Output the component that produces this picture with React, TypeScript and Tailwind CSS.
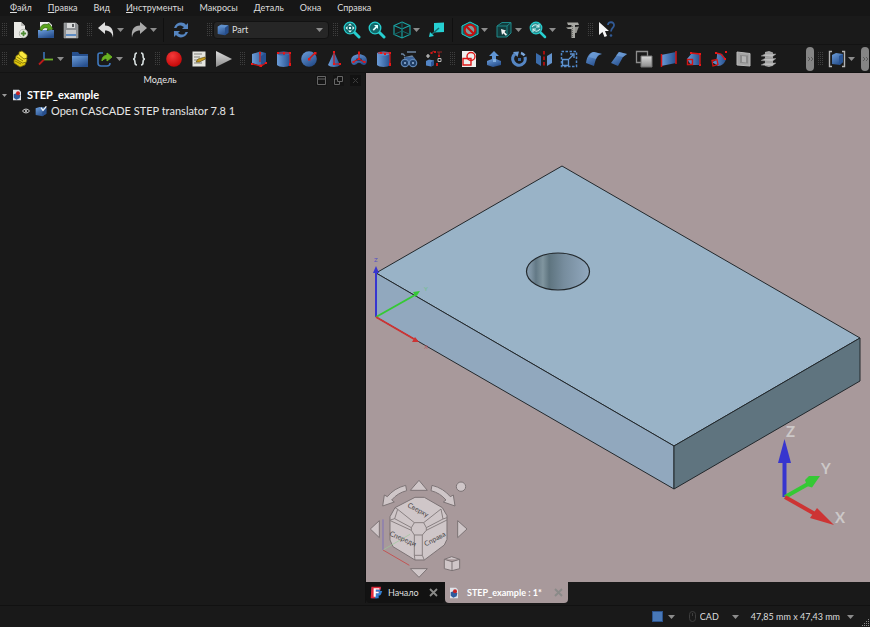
import type { ReactNode } from "react";

interface IconProps {
  children: ReactNode
  size?: number
}

interface ToolProps {
  label: string
  menu?: boolean
  narrow?: boolean
  children: ReactNode
}

const Icon = ({ children, size = 18 }: IconProps) => (
  <svg width={size} height={size} viewBox="0 0 18 18" fill="none" className="shrink-0">{children}</svg>
)

const Caret = () => (
  <svg width="7" height="4" viewBox="0 0 7 4" className="shrink-0"><path d="M0 0h7L3.5 4z" fill="#8c8c8c" /></svg>
)

const Tool = ({ label, menu, narrow, children }: ToolProps) => (
  <button
    type="button"
    aria-label={label}
    className={`flex h-6 shrink-0 items-center gap-[2px] pl-1 hover:bg-[#2b2b2b] ${menu ? (narrow ? "w-[33px]" : "w-[34px]") : "w-[25px]"}`}
  >
    <Icon>{children}</Icon>
    {menu && <Caret />}
  </button>
)

const dots = [0, 2, 4, 6, 8, 10, 12]

const Handle = () => (
  <span className="flex w-[10px] shrink-0 justify-end pr-px">
    <svg width="5" height="14" viewBox="0 0 5 14">
      {dots.map((y) => (
        <path key={y} d={`M0 ${y}h1v1H0zM2 ${y}h1v1H2zM4 ${y}h1v1H4z`} fill="#3f3f3f" />
      ))}
    </svg>
  </span>
)

const Separator = () => <span className="mx-1 h-6 w-px shrink-0 bg-[#101010]" />

const More = () => (
  <button type="button" aria-label="Ещё" className="flex h-6 w-2 shrink-0 items-center justify-center rounded-sm bg-[#858585]">
    <svg width="5" height="4" viewBox="0 0 5 4"><path d="M0 0l2 2-2 2M3 0l2 2-2 2" stroke="#5a5a5a" fill="none" /></svg>
  </button>
)

const Gradients = () => (
  <svg width="0" height="0" className="absolute" aria-hidden="true">
    <defs>
      <linearGradient id="blue" x1="0" y1="0" x2="0.6" y2="1">
        <stop offset="0" stopColor="#6d9fdc" />
        <stop offset="1" stopColor="#274f8d" />
      </linearGradient>
      <linearGradient id="blueH" x1="0" y1="0" x2="1" y2="0">
        <stop offset="0" stopColor="#6b9cd8" />
        <stop offset="1" stopColor="#26508f" />
      </linearGradient>
      <linearGradient id="grey" x1="0" y1="0" x2="0" y2="1">
        <stop offset="0" stopColor="#dcdcdc" />
        <stop offset="1" stopColor="#8b8b8b" />
      </linearGradient>
      <radialGradient id="red" cx="0.4" cy="0.3" r="0.7">
        <stop offset="0" stopColor="#f43a3a" />
        <stop offset="1" stopColor="#c40808" />
      </radialGradient>
    </defs>
  </svg>
)

const menus = [
  { key: "Ф", text: "айл" },
  { key: "П", text: "равка" },
  { key: "", text: "Вид" },
  { key: "И", text: "нструменты" },
  { key: "", text: "Макросы" },
  { key: "Д", text: "еталь" },
  { key: "", text: "Окна" },
  { key: "", text: "Справка" },
]

const MenuBar = () => (
  <nav className="flex h-4 items-center gap-4 bg-[#161616] px-[10px]">
    {menus.map((item) => (
      <button type="button" key={item.text} className="text-[9px] leading-4 text-[#dedede]">
        {item.key && <span className="underline underline-offset-1">{item.key}</span>}{item.text}
      </button>
    ))}
  </nav>
)

const FileToolbar = () => (
  <div className="flex h-[29px] items-center border-b border-[#131313] bg-[#1a1a1a]">
    <span className="-ml-[2px] flex"><Handle /></span>
    <Tool label="Создать">
      <path d="M2 1h7l4 4v12H2z" fill="#e9e9e5" />
      <path d="M9 1v4h4z" fill="#b9b9b5" />
      <circle cx="11.5" cy="12.5" r="4.2" fill="#f0f0ee" stroke="#a4aaa0" strokeWidth="0.8" />
      <path d="M11.5 9.8v5.4M8.8 12.5h5.4" stroke="#4c8a32" strokeWidth="1.8" />
    </Tool>
    <Tool label="Открыть">
      <path d="M3 1h9l3 3v8H3z" fill="#ececec" />
      <path d="M1 9h16v8H1z" fill="url(#blue)" />
      <path d="M3 9C3 5 6 2.500 10 3.500l2-1 4 5.500-6 1.500 1-2C9 6 6 6.500 5 9.500z" fill="#5aa51c" stroke="#2e5d0c" strokeWidth="0.7" />
    </Tool>
    <Tool label="Сохранить">
      <path d="M2 2h12l2 2v13H2z" fill="#8d9093" stroke="#a8abad" strokeWidth="0.6" />
      <path d="M5 2h8v5H5z" fill="#d9dadb" />
      <path d="M10 3h2v3h-2z" fill="#55585b" />
      <path d="M4 9h10v8H4z" fill="#c6c8ca" />
      <path d="M4 13h10v2H4z" fill="#5d8cc4" />
    </Tool>
    <Handle />
    <Tool label="Отменить" menu narrow>
      <path d="M1 7l7-6v3.500c6 0 9 4 8 12-1-5-3.500-7-8-7V13z" fill="#dedede" />
    </Tool>
    <Tool label="Повторить" menu narrow>
      <path d="M17 7l-7-6v3.500c-6 0-9 4-8 12 1-5 3.500-7 8-7V13z" fill="#a9a9a9" />
    </Tool>
    <Separator />
    <Tool label="Обновить">
      <path d="M2 7C4 1 11 0 14 4l2-2v6h-6l2-2C9 3.500 5 4 4.500 7z" fill="#5585c0" />
      <path d="M16 11c-2 6-9 7-12 3l-2 2v-6h6l-2 2c3 2.500 7 2 7.500-1z" fill="#5585c0" />
    </Tool>
    <span className="ml-[10px] flex"><Handle /></span>
    <label className="relative flex h-[18px] w-[116px] shrink-0 items-center rounded-sm border border-[#121212] bg-[#262626]">
      <span className="pointer-events-none absolute left-[3px]">
        <Icon size={12}>
          <path d="M1 4l5-3 11 1v11l-5 4-11-2z" fill="url(#blue)" />
          <path d="M1 4l11 1.500L17 2 6 1z" fill="#5f90cc" />
          <path d="M12 5.500V17l5-4V2z" fill="#274f8d" />
        </Icon>
      </span>
      <select aria-label="Верстак" className="w-full appearance-none bg-transparent pl-[18px] text-[9px] leading-4 text-[#dedede] outline-none">
        <option>Part</option>
      </select>
      <span className="pointer-events-none absolute right-[5px]"><Caret /></span>
    </label>
    <Handle />
    <Tool label="Вписать всё">
      <path d="M11 11l5 5" stroke="#27cfd0" strokeWidth="3" strokeLinecap="round" />
      <circle cx="7" cy="7" r="5.800" fill="#12686a" stroke="#27cfd0" strokeWidth="1.300" />
      <path d="M7 2.500l2 2H5zM7 11.500l2-2H5zM2.500 7l2-2v4zM11.500 7l-2-2v4zM6 6h2v2H6z" fill="#e3ffff" />
    </Tool>
    <Tool label="Вписать выделенное">
      <path d="M11 11l5 5" stroke="#27cfd0" strokeWidth="3" strokeLinecap="round" />
      <circle cx="7" cy="7" r="5.800" fill="#12686a" stroke="#27cfd0" strokeWidth="1.300" />
      <path d="M10 4v4L8.800 6.800l-3 3-1.200-1.200 3-3L6 4z" fill="#e3ffff" />
    </Tool>
    <Tool label="Изометрия" menu>
      <path d="M9 1l8 3.500v9L9 17l-8-3.500v-9z" stroke="#1aa6a6" strokeWidth="1.100" />
      <path d="M1 4.500L9 8l8-3.500M9 8v9" stroke="#1aa6a6" strokeWidth="1.100" />
      <path d="M1 13.500L9 10l8 3.500M9 1v9" stroke="#12686a" />
    </Tool>
    <Tool label="Выровнять по выделенному">
      <path d="M7 2l10-.5V11l-10 .5z" fill="#26d0d2" />
      <path d="M12 7l-8 7" stroke="#146e70" strokeWidth="1.500" />
      <path d="M2 16l1-5 4 4z" fill="#26d0d2" />
    </Tool>
    <Separator />
    <Tool label="Стиль отображения" menu>
      <path d="M9 1l8 4v8l-8 4-8-4V5z" fill="#166365" stroke="#27cfd0" />
      <circle cx="9" cy="9" r="5.300" fill="#7f9c9c" stroke="#c40f0f" strokeWidth="2" />
      <path d="M5.500 5.500l7 7" stroke="#c40f0f" strokeWidth="2.200" />
    </Tool>
    <Tool label="Выбор" menu>
      <path d="M2 5l5-3.500h9V12l-4 4H2z" fill="#123c3d" stroke="#1e8889" />
      <path d="M2 5h10v11M12 5l4-3.500" stroke="#1e8889" />
      <path d="M6 8l5 1.500-1.500 1.500 2.500 2.500-1.200 1.200L8.300 12.200 7 14z" fill="#f2f2f2" />
    </Tool>
    <Tool label="Масштаб" menu>
      <path d="M11 11l5 5" stroke="#27cfd0" strokeWidth="2.500" strokeLinecap="round" />
      <circle cx="7" cy="7" r="5.800" fill="#2b8e91" stroke="#27cfd0" strokeWidth="1.200" />
      <path d="M3 6c2-3 5-3 7 0M11 8c-2 3-5 3-7 0M10 3v3H7M4 11V8h3" stroke="#cfeeee" strokeWidth="1.100" />
    </Tool>
    <Tool label="Измерить">
      <path d="M4 1.500h11l1 2.500h-4v13H8.500V8H5L3 6.500 8.500 6V4H5z" fill="#a7a7a2" />
      <path d="M12 6l4-.5-1.500 3.500-1 3H12z" fill="#93938e" />
      <path d="M9.500 5v11" stroke="#6e6e6a" strokeDasharray="1 1" />
    </Tool>
    <Handle />
    <Tool label="Что это?">
      <path d="M1 1l10 9H7l2 5-2.500 1-2-5L1 14z" fill="#f4f4f4" />
      <path d="M10 4c0-4 6.500-3.500 6 .5-.3 2.500-3 2.500-3 6" stroke="#315a96" strokeWidth="1.800" />
      <circle cx="13" cy="14.500" r="1.300" fill="#315a96" />
    </Tool>
  </div>
)

const PartToolbar = () => (
  <div className="flex h-[28px] items-center border-b border-[#131313] bg-[#1a1a1a]">
    <span className="-ml-[2px] flex"><Handle /></span>
    <Tool label="Деталь">
      <path d="M2 10l3-2 9 4-1 3-5 2-6-4z" fill="#e0c70c" stroke="#76680a" strokeWidth="0.8" />
      <path d="M4 6l3-2 8 5-.5 3-4 1L3.500 9z" fill="#f1dd26" stroke="#76680a" strokeWidth="0.8" />
      <path d="M7 2l3-1 5 4v3l-3 1-5-4z" fill="#fbe93d" stroke="#76680a" strokeWidth="0.8" />
      <path d="M3 11l6 3M5 7l6 4" stroke="#8f7e08" />
    </Tool>
    <Tool label="Система координат" menu>
      <path d="M7 9V2" stroke="#3b74b8" strokeWidth="1.600" />
      <path d="M7 9.500h9" stroke="#6fae2c" strokeWidth="1.800" />
      <path d="M7 9.500l-5 5" stroke="#bb1a1a" strokeWidth="1.800" />
    </Tool>
    <Tool label="Группа">
      <path d="M1 2h6l1.500 2H17v13H1z" fill="#27508e" />
      <path d="M1 6h16v11H1z" fill="url(#blue)" />
    </Tool>
    <Tool label="Ссылка" menu>
      <path d="M7 3H4C2.500 3 2 4 2 5v8c0 2 1 3 3 3h6c2 0 3-1 3-3" stroke="#3f78bd" strokeWidth="1.600" />
      <path d="M6 11c0-4 2-5.500 5-5.500V3l5 4-5 4V8.500c-2 0-4 .5-5 2.500z" fill="#68b021" stroke="#68b021" />
    </Tool>
    <Tool label="Переменные">
      <path d="M7 3C5 3 5 4 5 5.500S5 9 3 9c2 0 2 2 2 3.500S5 15 7 15M11 3c2 0 2 1 2 2.500S13 9 15 9c-2 0-2 2-2 3.500s0 2.500-2 2.500" stroke="#d4dcdc" strokeWidth="1.600" />
    </Tool>
    <Handle />
    <Tool label="Записать макрос"><circle cx="9" cy="9" r="7.800" fill="url(#red)" /></Tool>
    <Tool label="Макросы">
      <path d="M2.500 1.500h13v15h-13z" fill="#e4e4de" />
      <path d="M4 4h8M4 7h6M4 10h4M4 13h8" stroke="#81817c" />
      <path d="M6 12l2-3 7-2 .5 2-6 3z" fill="#c69a1b" stroke="#53450f" strokeWidth="0.6" />
    </Tool>
    <Tool label="Выполнить макрос"><path d="M1 1l16 8-16 8z" fill="url(#grey)" /></Tool>
    <Handle />
    <Tool label="Куб">
      <path d="M2 4l8-2.500 6 1.500v10l-5 3-9-3z" fill="url(#blueH)" />
      <path d="M11 6V16l5-3V3z" fill="#26508f" />
      <path d="M10 3v9M2 14l9 2 5-3" stroke="#c91414" strokeWidth="1.200" />
      <path d="M9 2h2v2H9zM1 13h2v2H1zM9.500 14.500h2.500V17H9.500zM15 12h2v2h-2z" fill="#ea1616" />
    </Tool>
    <Tool label="Цилиндр">
      <path d="M2 3h13v12c-2 2.500-11 2.500-13 0z" fill="url(#blueH)" />
      <ellipse cx="8.500" cy="3.500" rx="6.500" ry="2" fill="#3969a9" />
      <path d="M3 3h12v12M9 2v3" stroke="#cc1313" strokeWidth="1.200" />
      <path d="M2 2h2v2H2zM8 2h2v2H8zM14 2h2v2h-2zM14 13h2v3h-2z" fill="#ea1616" />
    </Tool>
    <Tool label="Сфера">
      <circle cx="9" cy="9" r="7.800" fill="url(#blue)" />
      <path d="M9 9l6-6" stroke="#cc1313" strokeWidth="1.400" />
      <path d="M8 8h2.500v2.500H8zM14 2h2.500v2.500H14z" fill="#ea1616" />
    </Tool>
    <Tool label="Конус">
      <path d="M9 2l6 13c-2 2.500-10 2.500-12 0z" fill="url(#blueH)" />
      <path d="M9 2v12h6" stroke="#cc1313" strokeWidth="1.200" />
      <path d="M8 1h2v2H8zM8 13h2v2H8zM14 13h2v2h-2z" fill="#ea1616" />
    </Tool>
    <Tool label="Тор">
      <path d="M1 10.500C1 2 17 2 17 10.500c0 5-4 5.500-6 3-1-1-3-1-4 0-2 2.500-6 2-6-3z" fill="url(#blue)" />
      <ellipse cx="9" cy="9.500" rx="3" ry="1.500" fill="#1f3d6b" />
      <path d="M9 3v6l-6 3M9 9l5 3" stroke="#cc1313" strokeWidth="1.100" />
      <path d="M8 1.500h2v3H8zM8 8h2v2H8zM2.500 11h2v2h-2zM13.500 11h2v2h-2z" fill="#ea1616" />
    </Tool>
    <Tool label="Труба">
      <path d="M2 3h13v12c-2 2.500-11 2.500-13 0z" fill="url(#blueH)" />
      <ellipse cx="8.500" cy="3.500" rx="6.500" ry="2" fill="#5f8fca" />
      <path d="M3 3h12v12" stroke="#cc1313" strokeWidth="1.200" />
      <path d="M5 2h2v2H5zM9 3h2v2H9zM14 2h2v2h-2zM14 13h2v3h-2z" fill="#ea1616" />
    </Tool>
    <Tool label="Примитивы">
      <path d="M7 2h9M5 6l-2-2H1M4 8l8-2 3 4" stroke="#6d87a3" strokeWidth="1.300" />
      <path d="M5 7h9l1 5H6z" fill="#3d659b" />
      <circle cx="5" cy="13" r="3.700" fill="#203e66" stroke="#5f86b6" strokeWidth="1.200" />
      <circle cx="13" cy="13" r="3.700" fill="#203e66" stroke="#5f86b6" strokeWidth="1.200" />
      <path d="M4 12h2v2H4zM12 12h2v2h-2z" fill="#7c9abf" />
    </Tool>
    <Tool label="Построитель фигур">
      <path d="M1 11l3-1.500 5 1V15l-3 1.500-5-1z" fill="#5285c6" />
      <path d="M6 12v4.500l3-1.500v-4.500z" fill="#2c5697" />
      <path d="M1 6h4M3 4v4" stroke="#cfcfcf" strokeWidth="1.200" />
      <path d="M6 3l3-2M12 2h5M14 2v4" stroke="#8e2222" strokeWidth="1.200" />
      <path d="M5.500 2h2v2h-2zM9 1h2v2H9zM13 5h2v2h-2zM11 13h2v3h-2z" fill="#c91616" />
      <path d="M13 8.500h3v3h-3z" stroke="#b9b9b9" />
    </Tool>
    <Handle />
    <Tool label="Эскиз">
      <path d="M2 1h11l3 3v13H2z" fill="#efefee" />
      <path d="M3 8.500h8V15H3z" stroke="#dc1717" strokeWidth="1.400" />
      <circle cx="11" cy="6.500" r="4" stroke="#dc1717" strokeWidth="1.400" />
    </Tool>
    <Tool label="Выдавить">
      <path d="M9 1l5 5h-3v5H7V6H4z" fill="#5f95d5" />
      <path d="M2 11l5-2h4l5 2v4l-8 2-6-2z" fill="url(#blue)" />
      <path d="M8 9h3v3H8z" fill="#83afe1" />
    </Tool>
    <Tool label="Вращать">
      <path d="M5 4a6.300 6.300 0 1 0 10 3" stroke="#5586c4" strokeWidth="3.200" />
      <path d="M11 3a7 7 0 0 1 3.500 2.500" stroke="#7aa7dc" strokeWidth="2.500" />
      <path d="M3 2l6-.5-1.500 5.500z" fill="#6a9bd6" />
      <path d="M8 8h3v3H8z" fill="#35639f" />
    </Tool>
    <Tool label="Отразить">
      <path d="M1 3l5 3v10l-5-3z" fill="#3b6cab" />
      <path d="M17 3l-5 3v10l5-3z" fill="#6494ce" />
      <path d="M9 1v16" stroke="#b30f0f" strokeWidth="1.800" strokeDasharray="3.500 2" />
    </Tool>
    <Tool label="Масштабировать">
      <path d="M1.500 1.500h15v15h-15z" stroke="#4f86c7" strokeWidth="1.500" strokeDasharray="2.500 1.500" />
      <path d="M2.500 9.500h6v6h-6z" fill="#182636" stroke="#5f93d0" strokeWidth="1.300" />
      <path d="M9 9l4-4M10 4h4v4" stroke="#5f93d0" strokeWidth="1.300" />
    </Tool>
    <Tool label="Скругление">
      <path d="M1 13C2 6 5 2 9 2l8 2c-5 1-6 4-8 12z" fill="url(#blue)" />
      <path d="M9 2l8 2c-4 0-5 3-6 5L4 7c1-3 3-5 5-5z" fill="#77a6df" opacity="0.6" />
    </Tool>
    <Tool label="Фаска">
      <path d="M1 13L9 2l8 2-4 3-5 9z" fill="url(#blue)" />
      <path d="M9 2l8 2-4 3-7-1.500z" fill="#79a8e0" opacity="0.6" />
    </Tool>
    <Tool label="Грань из контуров">
      <path d="M1.500 1.500h11v11h-11z" fill="#1c1c1c" stroke="#8d8d8d" strokeWidth="1.300" />
      <path d="M6 6h11v11H6z" fill="url(#grey)" stroke="#727272" />
    </Tool>
    <Tool label="Линейчатая поверхность">
      <path d="M1 5l15-3v11L1 16z" fill="url(#blueH)" />
      <path d="M1.500 4v13M16 1v13" stroke="#d31414" strokeWidth="1.500" />
    </Tool>
    <Tool label="Профиль">
      <path d="M2 9l5-6 8 1v11l-9 0z" fill="url(#blueH)" />
      <path d="M2.500 9.500h5v5h-5zM6 3l9 1v11" stroke="#d31414" strokeWidth="1.400" />
      <path d="M5 2h2v2H5zM14 3h2v2h-2zM14 14h2v2h-2z" fill="#ea1616" />
    </Tool>
    <Tool label="Сдвиг по траектории">
      <path d="M2 12c5-1 5-4 5-8l5 0 4 5c-1 4-4 7-8 7z" fill="url(#blueH)" />
      <path d="M2 10.500l5-1 1 5-5 1.500zM6 3l5 1 4 5" stroke="#d31414" strokeWidth="1.300" />
      <path d="M5 2h2v2H5zM14 8h2v2h-2zM15 1h2v2h-2z" fill="#ea1616" />
    </Tool>
    <Tool label="Сечение">
      <path d="M2 2l13 1.500V16L2 15z" fill="#a4a4a4" stroke="#b9b9b9" />
      <path d="M5 5l8 .500v8L5 13z" fill="#8a8a8a" />
      <path d="M7 6l4 .500v6L7 12z" fill="#b4b4b4" />
    </Tool>
    <Tool label="Поперечные сечения">
      <path d="M5 2l4-1 4 1.500v13L9 17l-4-1z" fill="#a6a6a6" />
      <path d="M1 6l4-2h11l-4 3zM1 10.500l4-2h11l-4 3zM1 15l4-2h11l-4 3z" fill="#bebebe" stroke="#8d8d8d" strokeWidth="0.500" />
    </Tool>
    <span className="ml-auto flex items-center">
      <More />
      <Handle />
      <Tool label="Соединение" menu>
        <path d="M4 5l4-2 7 1v8l-3 3-8-1z" fill="url(#blue)" />
        <path d="M11 6v9l4-3V4z" fill="#285393" />
        <path d="M4 1.500H1.500v15H4M14 1.500h2.500v15H14" stroke="#b4b4b4" strokeWidth="1.400" />
      </Tool>
      <span className="mr-px ml-[3px] flex"><More /></span>
    </span>
  </div>
)

const DocIcon = () => (
  <Icon size={12}>
    <path d="M3 1h9l3 3v13H3z" fill="#dfe4ea" />
    <path d="M4 8l5-2 5 3-1 5-5 2-4-3z" fill="#2f5b9c" />
    <circle cx="10.500" cy="6.500" r="3" fill="#c92222" />
  </Icon>
)

const ModelPanel = () => (
  <aside className="flex min-w-0 flex-col border-r border-[#111] bg-[#191919] text-[#e6e6e6]">
    <header className="flex h-[14px] items-center pr-1">
      <h2 className="flex-1 pl-1 text-center text-[9px] leading-[14px]">Модель</h2>
      <div className="flex gap-[6px]">
        <button type="button" aria-label="Свернуть" className="flex size-[11px] items-center justify-center bg-[#141414]">
          <svg width="9" height="9" viewBox="0 0 9 9"><path d="M.5.5h8v8h-8zM.5 3h8" stroke="#666" fill="none" /></svg>
        </button>
        <button type="button" aria-label="Открепить" className="flex size-[11px] items-center justify-center bg-[#141414]">
          <svg width="9" height="9" viewBox="0 0 9 9"><path d="M3.500.5h5v5h-5zM3.500 3h-3v5.500h5v-3" stroke="#666" fill="none" /></svg>
        </button>
        <button type="button" aria-label="Закрыть" className="flex size-[11px] items-center justify-center bg-[#121212]">
          <svg width="7" height="7" viewBox="0 0 7 7"><path d="M1 1l5 5M6 1L1 6" stroke="#3c3c3c" /></svg>
        </button>
      </div>
    </header>
    <ul>
      <li>
        <div className="flex h-4 items-center pl-[2px]">
          <svg width="5" height="3" viewBox="0 0 5 3"><path d="M0 0h5L2.500 3z" fill="#9a9a9a" /></svg>
          <span className="ml-1"><DocIcon /></span>
          <span className="ml-1 text-[11px] leading-4 font-bold text-white">STEP_example</span>
        </div>
        <ul>
          <li className="flex h-4 items-center pl-[22px]">
            <svg width="8" height="6" viewBox="0 0 8 6">
              <path d="M.5 3C2 .5 6 .5 7.500 3 6 5.500 2 5.500.5 3z" stroke="#cfcfcf" fill="none" />
              <circle cx="4" cy="3" r="1" fill="#ddd" />
            </svg>
            <span className="ml-[5px]">
              <Icon size={12}>
                <path d="M1 5l6-2 10 1v9l-6 4-10-2z" fill="url(#blue)" />
                <path d="M11 7v10l6-4V4z" fill="#274f8d" />
                <path d="M9 4l3 4 5-6" stroke="#f2f6fb" strokeWidth="2" />
              </Icon>
            </span>
            <span className="ml-1 text-[11px] leading-4">Open CASCADE STEP translator 7.8 1</span>
          </li>
        </ul>
      </li>
    </ul>
  </aside>
)

// Rotation cube, drawn on a 3x grid
const NavigationCube = () => (
  <g>
    <g transform="translate(365 470) scale(.3333)" fill="#cfc6c8" stroke="#7b7274" strokeWidth="3" strokeLinejoin="round">
      <path d="M136 61l26-30 25 30zM136 296h51l-25 26zM16 177l27-25v51zM306 177l-28-25v51z" />
      <path d="M122 46C98 52 80 64 67 80L58 75 53 108 88 96 80 90C92 76 106 67 125 62z" />
      <path d="M201 46C225 52 243 64 256 80L265 75 270 108 235 96 243 90C231 76 217 67 198 62z" />
      <circle cx="288" cy="50" r="14" />
      <path d="M238 268l22-8 24 8v28l-23 6-23-6zM238 268l23 7 23-7M261 275v27" />
      <path d="M150 82h28l54 31 14 24v71l-8 17-60 45h-28l-66-40-9-20v-70l15-27z" />
      <path
        fill="none"
        strokeWidth="2.500"
        d="M98 118l50 40h28l52-41M89 146l50 27M234 147l-50 26M148 158l-9 15v8l9 14h24l12-14v-8l-8-15M148 195v61h24v-61M98 118l-9 28M228 117l6 30M98 118l-8-5M89 146l-13 4M234 147l12-4M76 152l63 29M246 150l-62 31M148 256l2 14M172 256l6 14"
      />
      <path d="M54 148v92" stroke="#7d72bb" fill="none" />
      <path d="M54 240l81-47" stroke="#98c898" fill="none" strokeWidth="2" />
      <path d="M54 240l79 46" stroke="#c25454" fill="none" />
    </g>
    <g fill="#4b4648" fontSize="7" textAnchor="middle">
      <text transform="translate(417 512) rotate(28)">Сверху</text>
      <text transform="translate(402 541) rotate(24)">Спереди</text>
      <text transform="translate(436 541) rotate(-28)">Справа</text>
    </g>
  </g>
)

const Scene = () => (
  <svg viewBox="366 73 504 509" className="min-h-0 w-full flex-1" role="img" aria-label="STEP_example">
    <defs>
      <linearGradient id="bore">
        <stop offset="0" stopColor="#8ba1b4" />
        <stop offset="0.08" stopColor="#7b909f" />
        <stop offset="0.15" stopColor="#637986" />
        <stop offset="0.26" stopColor="#80959f" />
        <stop offset="0.36" stopColor="#5e747f" />
        <stop offset="0.6" stopColor="#778d9e" />
        <stop offset="1" stopColor="#92a9bf" />
      </linearGradient>
    </defs>
    <g stroke="#22282c" strokeLinejoin="round">
      <path d="M562 166L860 338 674 446 376 273z" fill="#99b3c7" />
      <path d="M376 273l298 173v43L376 317z" fill="#91a8be" />
      <path d="M674 446l186-108v43L674 489z" fill="#5f747f" />
      <ellipse cx="558" cy="271.500" rx="31.500" ry="18.500" fill="url(#bore)" strokeWidth="1.200" />
    </g>
    <g strokeWidth="2">
      <path d="M376 317v-46" stroke="#3735cf" />
      <path d="M376 317l39-22" stroke="#35c935" />
      <path d="M376 317l38 22" stroke="#cd3434" />
      <path d="M376 266l-3 7h6z" fill="#3735cf" />
      <path d="M420 291l-7 1 3 5z" fill="#35c935" />
      <path d="M419 342l-4-5-3 5z" fill="#cd3434" />
    </g>
    <g fontSize="6">
      <text x="374" y="262" fill="#5450c4">Z</text>
      <text x="424" y="291" fill="#6ec083">Y</text>
      <text x="424" y="349" fill="#b9606a">X</text>
    </g>
    <g strokeWidth="4">
      <path d="M784.500 497v-36" stroke="#3735cf" />
      <path d="M784.500 439l-6.500 24h13z" fill="#3735cf" />
      <path d="M785 497l23-13" stroke="#35c935" />
      <path d="M820 476l-11 0-4 4 2 6 5 1.500z" fill="#35c935" />
      <path d="M785 497l30 17" stroke="#cd3434" />
      <path d="M834 525l-17-17-7 10z" fill="#cd3434" />
    </g>
    <g fontSize="15" fontWeight="700" fill="#ccc8c8">
      <text x="786" y="437">Z</text>
      <text x="821" y="474">Y</text>
      <text x="835" y="523">X</text>
    </g>
    <NavigationCube />
  </svg>
)

const Cross = () => (
  <svg width="9" height="9" viewBox="0 0 9 9"><path d="M1 1l7 7M8 1L1 8" stroke="#8a8a88" strokeWidth="1.800" /></svg>
)

const DocumentTabs = () => (
  <div className="flex h-[21px] bg-[#191919] text-[9px] leading-4">
    <div className="flex w-[79px] items-center rounded-b-sm bg-[#121212] pl-1 text-[#dedede]">
      <Icon size={13}>
        <path d="M2 2h13l-1 5h3l-2 5h-3v5H2z" fill="#337fd0" />
        <path d="M2 1h13v4H7v3h6v4H7v5H1z" fill="#e02b3b" />
        <path d="M9 9h6l-1 4h-4v4H7z" fill="#337fd0" />
        <path d="M5 3h8v2H8v3h4v2H8v5H5z" fill="#fff" />
      </Icon>
      <button type="button" className="ml-[5px]">Начало</button>
      <button type="button" aria-label="Закрыть Начало" className="mr-[7px] ml-auto"><Cross /></button>
    </div>
    <div className="flex w-[123px] items-center rounded-b-sm bg-[#a8999b] pl-[3px] text-white">
      <DocIcon />
      <button type="button" className="ml-[7px] font-bold">STEP_example : 1*</button>
      <button type="button" aria-label="Закрыть STEP_example" className="mr-[5px] ml-auto"><Cross /></button>
    </div>
  </div>
)

const StatusBar = () => (
  <footer className="flex h-[21px] shrink-0 items-center justify-end bg-[#191919] text-[9px] leading-4 text-[#dedede]">
    <button type="button" aria-label="Уведомления" className="flex items-center gap-[5px]">
      <span className="size-[11px] border border-[#2b528b] bg-[#4878b8]" />
      <Caret />
    </button>
    <label className="relative ml-[14px] flex w-[50px] items-center">
      <svg width="7" height="11" viewBox="0 0 7 11" className="absolute left-0">
        <rect x=".5" y=".5" width="6" height="10" rx="3" stroke="#3d3d3d" fill="none" />
        <path d="M3.500 2v3" stroke="#3d3d3d" />
      </svg>
      <select aria-label="Стиль навигации" className="w-full appearance-none bg-transparent pl-[11px] outline-none">
        <option>CAD</option>
      </select>
      <span className="pointer-events-none absolute right-0"><Caret /></span>
    </label>
    <button type="button" className="ml-3 flex items-center gap-[7px]">
      47,85 mm x 47,43 mm
      <Caret />
    </button>
    <svg width="9" height="9" viewBox="0 0 9 9" className="ml-[7px] self-end">
      <path d="M7 1h1v1H7zM5 3h1v1H5zM7 3h1v1H7zM3 5h1v1H3zM5 5h1v1H5zM7 5h1v1H7zM1 7h1v1H1zM3 7h1v1H3zM5 7h1v1H5zM7 7h1v1H7z" fill="#8a8a8a" />
    </svg>
  </footer>
)

const App = () => {
  return <div className="flex h-screen flex-col overflow-hidden bg-[#191919] font-['Lato','Noto_Sans',sans-serif]">
    <Gradients />
    <MenuBar />
    <FileToolbar />
    <PartToolbar />
    <div className="grid min-h-0 flex-1 grid-cols-[366fr_504fr]">
      <ModelPanel />
      <main className="flex min-h-0 min-w-0 flex-col">
        <div className="flex min-h-0 flex-1 bg-[#a8999b]"><Scene /></div>
        <DocumentTabs />
      </main>
    </div>
    <div className="mt-[2px] border-t border-[#111]"><StatusBar /></div>
  </div>
}

export default App;
